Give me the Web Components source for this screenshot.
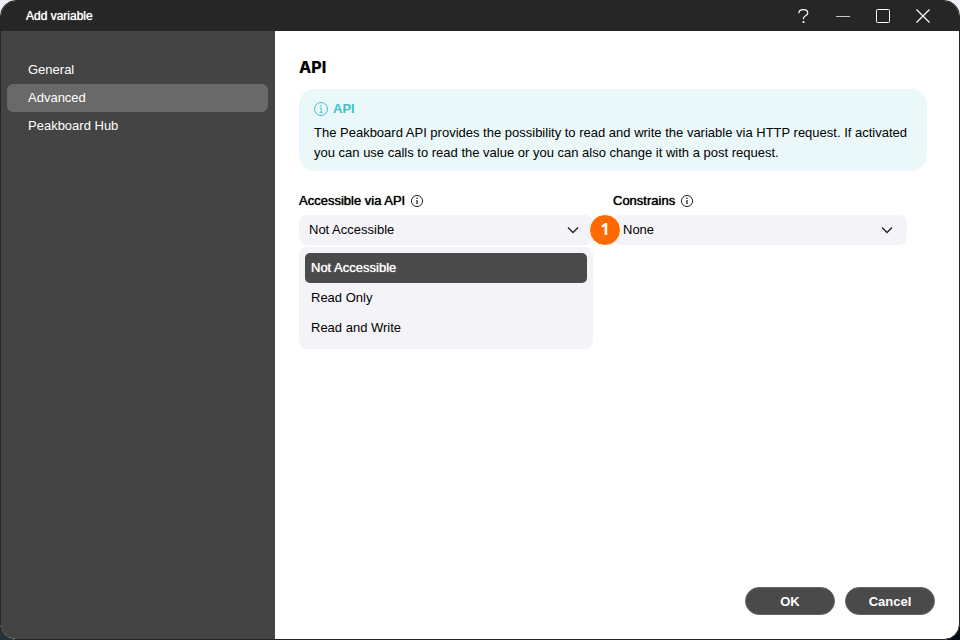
<!DOCTYPE html>
<html lang="en">
<head>
<meta charset="utf-8">
<title>Add variable</title>
<style>
  html, body { height: 100%; margin: 0; }
  body {
    background: linear-gradient(to right, #24323a, #020b14) bottom / 100% 50% no-repeat, #eeeef6;
    font-family: "Liberation Sans", Arial, sans-serif;
    font-size: 13px;
    line-height: 20px;
    color: #000;
  }
</style>
</head>
<body>
<dialog-window heading="Add variable">
  <side-nav slot="nav">
    <nav-item href="#general">General</nav-item>
    <nav-item href="#advanced" current>Advanced</nav-item>
    <nav-item href="#hub">Peakboard Hub</nav-item>
  </side-nav>
  <settings-section heading="API">
    <info-box heading="API">The Peakboard API provides the possibility to read and write the variable via HTTP request. If activated you can use calls to read the value or you can also change it with a post request.</info-box>
    <field-row>
      <select-field label="Accessible via API" options="Not Accessible|Read Only|Read and Write" open></select-field>
      <select-field label="Constrains" options="None" badge="1"></select-field>
    </field-row>
  </settings-section>
  <pill-button slot="actions">OK</pill-button>
  <pill-button slot="actions">Cancel</pill-button>
</dialog-window>

<script>
const define = (name, render) => customElements.define(name, class extends HTMLElement {
  constructor() {
    super();
    this.attachShadow({ mode: 'open' });
  }
  connectedCallback() {
    const t = document.createElement('template');
    t.innerHTML = `<style>*{box-sizing:border-box}:host{box-sizing:border-box}</style>` + render(this);
    this.shadowRoot.replaceChildren(t.content.cloneNode(true));
  }
});

define('info-icon', el => `
  <style>
    :host { display: block; flex: none; width: 12px; height: 12px; }
    :host([large]) { width: 14px; height: 14px; }
    svg { display: block; width: 100%; height: 100%; }
  </style>
  <svg viewBox="0 0 14 14" fill="none" stroke="currentColor" stroke-width="1" aria-hidden="true">
    <circle cx="7" cy="7" r="6.5"/>
    ${el.hasAttribute('large')
      ? '<path d="M5.8 6h1.4v4.2M5.6 10.3h3" stroke-width=".9"/>'
      : '<path d="M7 5.8v5" stroke-width="1.3"/>'}
    <circle cx="7" cy="3.8" r=".8" fill="currentColor" stroke="none"/>
  </svg>`);

define('dialog-window', el => `
  <style>
    :host { display: flex; flex-direction: column; min-height: 100vh; background: #fff; border: 1px solid #262626; border-radius: 16px; overflow: hidden; }
    header { display: flex; align-items: center; justify-content: space-between; height: 30px; padding: 0 16px 0 25px; background: #262626; color: #fff; }
    h1 { margin: 0; font-size: 12px; line-height: 20px; font-weight: 400; text-shadow: 0 0 1px currentColor; }
    .controls { display: flex; }
    .controls button { width: 40px; height: 30px; padding: 0; border: 0; background: none; color: #fff; display: grid; place-items: center; }
    svg { width: 16px; height: 16px; fill: none; stroke: currentColor; }
    .body { flex: 1; display: flex; }
    .main { flex: 1; display: flex; flex-direction: column; min-width: 0; }
    main { flex: 1; padding: 26px 32px 0 24px; }
    footer { display: flex; justify-content: flex-end; gap: 10px; padding: 24px; }
  </style>
  <header>
    <h1>${el.getAttribute('heading')}</h1>
    <div class="controls">
      <button aria-label="Help"><svg viewBox="0 0 16 16"><path d="M3.8 5.2C3.9 2.8 5.6 1.6 8.2 1.6s4.6 1.3 4.6 3.3c0 2.7-4.3 2.8-4.3 5.4v1" stroke-width="1.2"/><circle cx="8.5" cy="14" r="1.1" fill="currentColor" stroke="none"/></svg></button>
      <button aria-label="Minimize"><svg viewBox="0 0 16 16"><path d="M1 8.5h14" stroke="#c8c8c8"/></svg></button>
      <button aria-label="Maximize"><svg viewBox="0 0 16 16"><rect x="1.5" y="1.5" width="13" height="13" rx="1"/></svg></button>
      <button aria-label="Close"><svg viewBox="0 0 16 16"><path d="M1.5 1.5l13 13M14.5 1.5l-13 13" stroke-width="1.2"/></svg></button>
    </div>
  </header>
  <div class="body">
    <slot name="nav"></slot>
    <div class="main">
      <main><slot></slot></main>
      <footer><slot name="actions"></slot></footer>
    </div>
  </div>`);

define('side-nav', () => `
  <style>
    :host { display: block; flex: none; width: 274px; background: #444; color: #fff; padding: 25px 7px 0 6px; }
  </style>
  <nav><slot></slot></nav>`);

define('nav-item', el => `
  <style>
    :host { display: block; }
    a { display: block; padding: 4px 21px; border-radius: 6px; color: inherit; text-decoration: none; }
    :host([current]) a { background: #696969; }
  </style>
  <a href="${el.getAttribute('href')}" ${el.hasAttribute('current') ? 'aria-current="page"' : ''}><slot></slot></a>`);

define('settings-section', el => `
  <style>
    :host { display: block; }
    h2 { margin: 0 0 12px; font-family: Inter, sans-serif; font-size: 16px; line-height: 20px; font-weight: 800; }
  </style>
  <section><h2>${el.getAttribute('heading')}</h2><slot></slot></section>`);

define('info-box', el => `
  <style>
    :host { display: block; padding: 10px 15px 8px; background: #eaf8fa; border-radius: 16px; }
    h3 { display: flex; align-items: center; gap: 5px; margin: 0 0 4px; color: #42bfcd; font-size: 13px; line-height: 20px; font-weight: 700; }
    p { margin: 0; }
  </style>
  <h3><info-icon large></info-icon>${el.getAttribute('heading')}</h3>
  <p><slot></slot></p>`);

define('field-row', () => `
  <style>
    :host { display: grid; grid-template-columns: 1fr 1fr; padding-top: 20px; }
    ::slotted(*) { margin-right: 20px; }
  </style>
  <slot></slot>`);

define('select-field', el => {
  const options = el.getAttribute('options').split('|');
  const badge = el.getAttribute('badge');
  return `
  <style>
    :host { display: block; }
    .head { display: flex; align-items: center; gap: 6px; margin-bottom: 4px; }
    label { text-shadow: 0 0 1px currentColor; }
    .control { position: relative; display: grid; align-items: center; }
    .control > select, .control > svg { grid-area: 1 / 1; }
    select { appearance: none; width: 100%; height: 30px; padding: 0 32px 0 10px; border: 0; border-radius: 8px; background: #f4f3f8; color: inherit; font: inherit; }
    svg { justify-self: end; margin-right: 14px; width: 12px; height: 12px; fill: none; stroke: #222; stroke-width: 1.3; pointer-events: none; }
    ul { position: absolute; z-index: 1; top: 100%; left: 0; right: 0; margin: 2px 0 0; padding: 6px; list-style: none; background: #f4f3f8; border-radius: 8px; }
    li { padding: 5px 6px; border-radius: 5px; }
    li[aria-selected="true"] { background: #4a4a4a; color: #fff; text-shadow: 0 0 1px currentColor; }
    .badge { position: absolute; left: -24px; top: -1px; width: 32px; height: 32px; border: 1px solid #fff; border-radius: 50%; background: #ff6a00; color: #fff; font: 700 16px/28px "Open Sans", sans-serif; text-align: center; }
  </style>
  <div class="head"><label for="field">${el.getAttribute('label')}</label><info-icon></info-icon></div>
  <div class="control">
    <select id="field">${options.map(o => `<option>${o}</option>`).join('')}</select>
    <svg viewBox="0 0 12 12" aria-hidden="true"><path d="M1 3.5l5 5 5-5"/></svg>
    ${el.hasAttribute('open') ? `<ul role="listbox" aria-label="${el.getAttribute('label')}">${options.map((o, i) => `<li role="option" aria-selected="${i === 0}">${o}</li>`).join('')}</ul>` : ''}
    ${badge ? `<span class="badge">${badge}</span>` : ''}
  </div>`;
});

define('pill-button', () => `
  <style>
    :host { display: block; }
    button { display: block; width: 90px; height: 28px; padding: 2px 0 0; border: 1px solid #666; border-radius: 14px; background: #4a4a4a; color: #fff; font: 700 13px/20px "Liberation Sans", Arial, sans-serif; }
  </style>
  <button type="button"><slot></slot></button>`);
</script>
</body>
</html>
